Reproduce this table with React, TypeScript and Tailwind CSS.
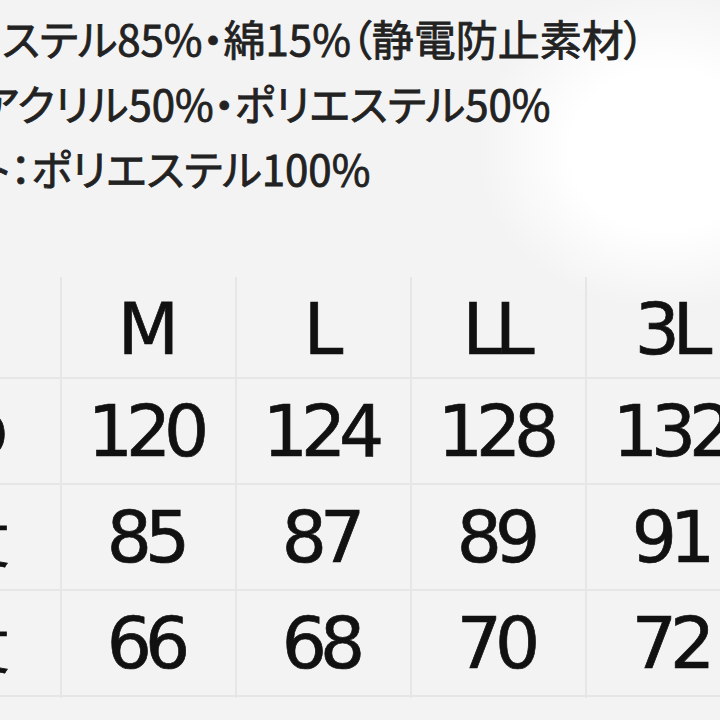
const lines = [
  { text: "ステル85%・綿15%（静電防止素材）", shift: "ml-[2px]" },
  { text: "アクリル50%・ポリエステル50%", shift: "ml-[-20px]" },
  { text: "ト：ポリエステル100%", shift: "ml-[-22px]" },
];

const sizes = ["M", "L", "LL", "3L"];

const rows = [
  { label: "胸回り", pad: "pr-[44px]", values: ["120", "124", "128", "132"] },
  { label: "着丈", pad: "pr-[50px]", values: ["85", "87", "89", "91"] },
  { label: "袖丈", pad: "pr-[50px]", values: ["66", "68", "70", "72"] },
];

const cell = "flex items-center justify-center pr-[7px] border-l-2 border-[#e6e6e6]";

export default function App() {
  return (
    <div className="w-[720px] h-[720px] overflow-hidden bg-[#f3f3f3] bg-[radial-gradient(ellipse_190px_160px_at_665px_150px,#ffffff_0%,#ffffff_50%,#f3f3f3_100%)] text-[#111]">
      <div className="pt-[5px] font-['Noto_Sans_CJK_JP',sans-serif] text-[42px] leading-[65px] text-[#222] [font-feature-settings:'palt'] [-webkit-text-stroke:0.8px_#222]">
        {lines.map((l) => (
          <div key={l.text} className={`whitespace-nowrap ${l.shift}`}>
            {l.text}
          </div>
        ))}
      </div>

      <div className="mt-[77px] w-[760px] font-['DejaVu_Sans',sans-serif] text-[71px] tracking-[-7px] [-webkit-text-stroke:0.7px_#111]">
        <div className="grid grid-cols-[60px_175px_175px_175px_175px] h-[100px]">
          <div />
          {sizes.map((s) => (
            <div key={s} className={cell}>
              {s}
            </div>
          ))}
        </div>
        {rows.map((r) => (
          <div
            key={r.label}
            className="grid grid-cols-[60px_175px_175px_175px_175px] h-[106px] border-t-2 border-[#e6e6e6]"
          >
            <div
              className={`flex items-center justify-end overflow-hidden ${r.pad} font-['Noto_Sans_CJK_JP',sans-serif] text-[56px] tracking-normal whitespace-nowrap`}
            >
              {r.label}
            </div>
            {r.values.map((v) => (
              <div key={v} className={cell}>
                {v}
              </div>
            ))}
          </div>
        ))}
        <div className="border-t-2 border-[#e6e6e6]" />
      </div>
    </div>
  );
}
